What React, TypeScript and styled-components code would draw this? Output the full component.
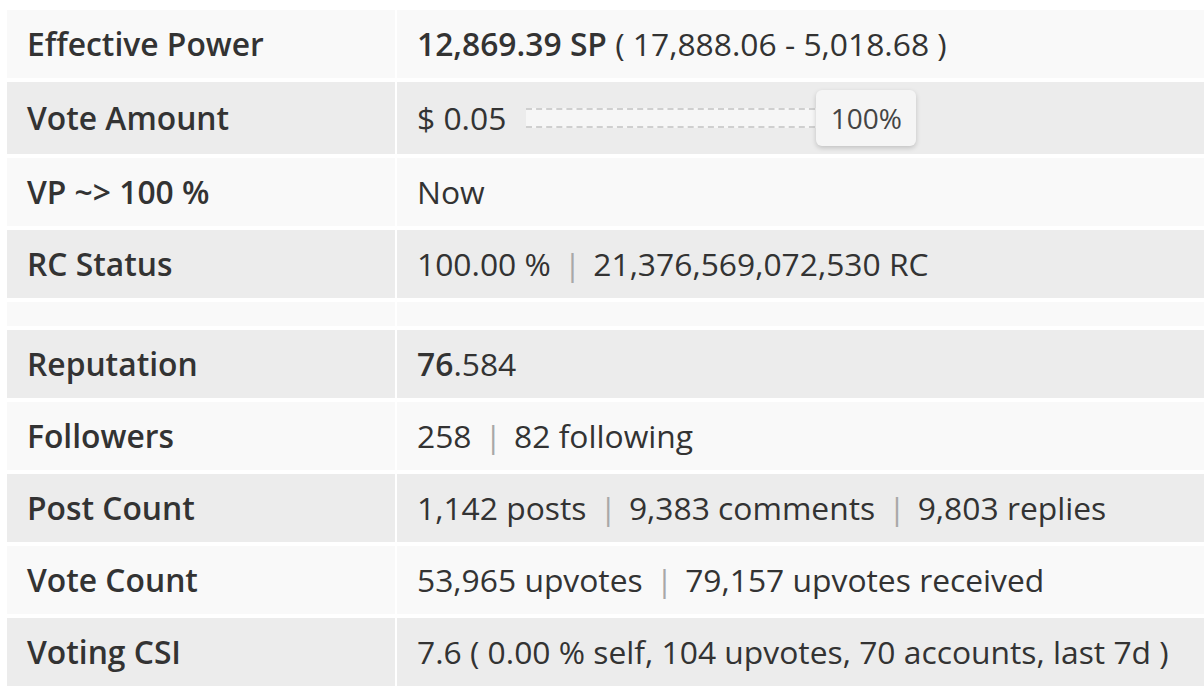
import styled, { createGlobalStyle } from 'styled-components';

const GlobalStyle = createGlobalStyle`
  html, body {
    margin: 0;
    padding: 0;
    background: #fff;
    overflow: hidden;
  }
  body {
    font-family: "Open Sans", "Liberation Sans", sans-serif;
    color: #333;
  }
`

const Page = styled.div`
  padding: 10px 0 0 7px;
  width: 1240px;
`

const Table = styled.div`
  display: flex;
  flex-direction: column;
  gap: 4px;
  width: 1230px;
`

const Row = styled.div<{ $dark?: boolean; $spacer?: boolean }>`
  display: grid;
  grid-template-columns: 388px 1fr;
  column-gap: 2px;
  min-height: ${p => (p.$spacer ? '24px' : '68px')};

  & > div {
    background: ${p => (p.$dark ? '#ececec' : '#f9f9f9')};
  }
`

const Label = styled.div`
  display: flex;
  align-items: center;
  padding: 0 20px;
  font-size: 31.8px;
  line-height: 40px;
  font-weight: 600;
  color: #333;
`

const Value = styled.div`
  display: flex;
  align-items: center;
  padding: 14px 20px;
  font-size: 31.8px;
  line-height: 40px;
  color: #333;
  white-space: nowrap;
`

const Strong = styled.b`
  font-weight: 600;
`

const Sep = styled.span`
  color: #a8a8a8;
  margin: 0 12px 0 13px;
`

const Slider = styled.div`
  position: relative;
  width: 390px;
  height: 56px;
  margin: -6px 0 -6px 20px;
  display: flex;
  align-items: center;
`

const Track = styled.div`
  width: 100%;
  height: 16px;
  background: #f6f6f6;
  border-top: 2px dashed #cfcfcf;
  border-bottom: 2px dashed #cfcfcf;
`

const Handle = styled.div`
  position: absolute;
  right: 0;
  top: 0;
  width: 100px;
  height: 56px;
  box-sizing: border-box;
  display: flex;
  align-items: center;
  justify-content: center;
  background: #f5f5f5;
  border-radius: 6px;
  box-shadow: 0 2px 5px rgba(0, 0, 0, 0.18);
  font-size: 28px;
  color: #444;
`

export default function App() {
  return (
    <Page>
      <GlobalStyle />
      <Table>
        <Row>
          <Label>Effective Power</Label>
          <Value>
            <Strong>12,869.39 SP</Strong>&nbsp;( 17,888.06 - 5,018.68 )
          </Value>
        </Row>
        <Row $dark>
          <Label>Vote Amount</Label>
          <Value>
            $ 0.05
            <Slider>
              <Track />
              <Handle>100%</Handle>
            </Slider>
          </Value>
        </Row>
        <Row>
          <Label>VP ~&gt; 100 %</Label>
          <Value>Now</Value>
        </Row>
        <Row $dark>
          <Label>RC Status</Label>
          <Value>
            100.00 %<Sep>|</Sep>21,376,569,072,530 RC
          </Value>
        </Row>
        <Row $spacer>
          <div />
          <div />
        </Row>
        <Row $dark>
          <Label>Reputation</Label>
          <Value>
            <Strong>76</Strong>.584
          </Value>
        </Row>
        <Row>
          <Label>Followers</Label>
          <Value>
            258<Sep>|</Sep>82 following
          </Value>
        </Row>
        <Row $dark>
          <Label>Post Count</Label>
          <Value>
            1,142 posts<Sep>|</Sep>9,383 comments<Sep>|</Sep>9,803 replies
          </Value>
        </Row>
        <Row>
          <Label>Vote Count</Label>
          <Value>
            53,965 upvotes<Sep>|</Sep>79,157 upvotes received
          </Value>
        </Row>
        <Row $dark>
          <Label>Voting CSI</Label>
          <Value>7.6 ( 0.00 % self, 104 upvotes, 70 accounts, last 7d )</Value>
        </Row>
      </Table>
    </Page>
  );
}
